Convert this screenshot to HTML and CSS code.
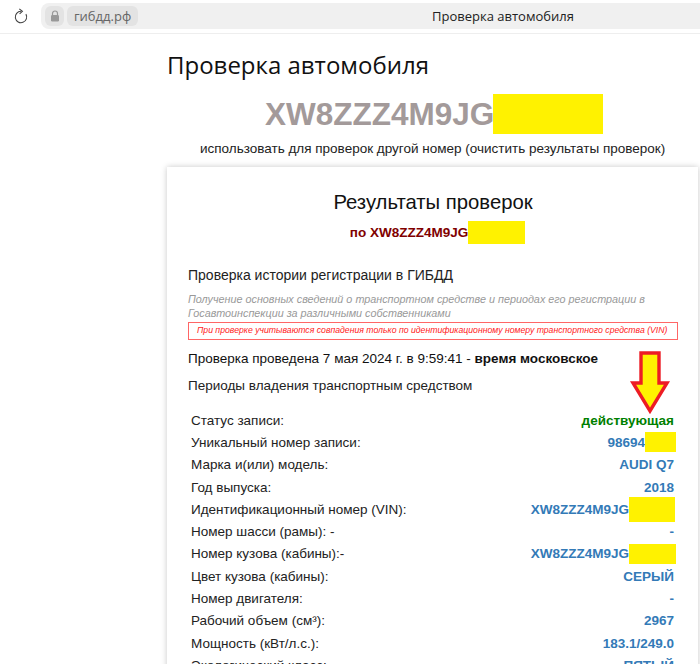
FILE: index.html
```html
<!DOCTYPE html>
<html lang="ru">
<head>
<meta charset="utf-8">
<title>Проверка автомобиля</title>
<link rel="stylesheet" href="styles.css">
</head>
<body>
<header class="browser">
  <svg class="reload" width="16" height="16" viewBox="0 0 16 16" fill="none" stroke="#444" stroke-width="1.1"><path d="M7 3.3A5.7 5.7 0 1 0 11.9 6.1"/><path d="M5.3 0.9L8.4 3.3 5.6 5.9"/></svg>
  <div class="address">
    <span class="lock-chip"><svg width="10" height="12" viewBox="0 0 10 12"><path d="M2.5 5V3.5a2.5 2.5 0 0 1 5 0V5" fill="none" stroke="#999" stroke-width="1.2"/><rect x="1" y="5" width="8" height="6.5" rx="1.2" fill="#999"/></svg></span>
    <span class="domain-chip">гибдд.рф</span>
    <span class="tab-title">Проверка автомобиля</span>
  </div>
</header>
<main class="page">
  <h1 class="page-title">Проверка автомобиля</h1>
  <div class="vin-line"><span class="vin">XW8ZZZ4M9JG</span><span class="mask mask-vin"></span></div>
  <p class="reset">использовать для проверок другой номер (очистить результаты проверок)</p>
  <section class="card">
    <h2 class="card-title">Результаты проверок</h2>
    <div class="card-sub">по XW8ZZZ4M9JG<span class="mask mask-sub"></span></div>
    <h3 class="check-title">Проверка истории регистрации в ГИБДД</h3>
    <p class="note">Получение основных сведений о транспортном средстве и периодах его регистрации в Госавтоинспекции за различными собственниками</p>
    <p class="warn">При проверке учитываются совпадения только по идентификационному номеру транспортного средства (VIN)</p>
    <p class="date">Проверка проведена 7 мая 2024 г. в 9:59:41 - <b>время московское</b></p>
    <p class="periods">Периоды владения транспортным средством</p>
    <svg class="arrow" width="42" height="64" viewBox="0 0 42 64"><polygon points="12,2 30,2 30,32 38,32 21,60 4,32 12,32" fill="#fff200" stroke="#ed1c24" stroke-width="3.4"/></svg>
    <dl class="rows">
      <div class="row"><dt>Статус записи:</dt><dd class="ok">действующая</dd></div>
      <div class="row"><dt>Уникальный номер записи:</dt><dd>98694<span class="mask mask-a"></span></dd></div>
      <div class="row"><dt>Марка и(или) модель:</dt><dd>AUDI Q7</dd></div>
      <div class="row"><dt>Год выпуска:</dt><dd>2018</dd></div>
      <div class="row"><dt>Идентификационный номер (VIN):</dt><dd>XW8ZZZ4M9JG<span class="mask mask-b"></span></dd></div>
      <div class="row"><dt>Номер шасси (рамы): -</dt><dd>-</dd></div>
      <div class="row"><dt>Номер кузова (кабины):-</dt><dd>XW8ZZZ4M9JG<span class="mask mask-c"></span></dd></div>
      <div class="row"><dt>Цвет кузова (кабины):</dt><dd>СЕРЫЙ</dd></div>
      <div class="row"><dt>Номер двигателя:</dt><dd>-</dd></div>
      <div class="row"><dt>Рабочий объем (см³):</dt><dd>2967</dd></div>
      <div class="row"><dt>Мощность (кВт/л.с.):</dt><dd>183.1/249.0</dd></div>
      <div class="row"><dt>Экологический класс:</dt><dd>ПЯТЫЙ</dd></div>
    </dl>
  </section>
</main>
</body>
</html>
```
FILE: styles.css
```css
* { box-sizing: border-box; }
html, body { margin: 0; height: 664px; overflow: hidden; background: #fff; }
body { font-family: "Liberation Sans", Arial, sans-serif; color: #111; }

.browser { height: 34px; padding: 3px 0 4px 14px; display: flex; align-items: center; border-bottom: 1px solid #eeeeee; }
.reload { flex: none; margin-right: 11px; }
.address { flex: 1; height: 26px; display: flex; align-items: center; gap: 3px; padding-left: 4px; background: #f0f0f0; border-radius: 8px 0 0 8px; position: relative; }
.lock-chip { width: 19px; height: 20px; display: flex; align-items: center; justify-content: center; background: #e3e3e3; border-radius: 6px; }
.domain-chip { width: 71px; height: 20px; padding-left: 7px; background: #e3e3e3; border-radius: 6px; font: 13px/20px "Open Sans", sans-serif; color: #666; }
.tab-title { position: absolute; left: 391px; top: 3px; font: 13px/20px "Open Sans", sans-serif; color: #222; }

.page { padding-left: 167px; padding-right: 2px; }
.page-title { margin: 13px 0 0; font: 400 24px/36px "Open Sans", sans-serif; color: #111; }
.vin-line { height: 40px; margin-top: 11px; padding-left: 98px; display: flex; }
.vin { font: 700 31.5px/40px "Liberation Sans", sans-serif; color: #a39a9a; }
.mask { display: inline-block; background: #fff200; }
.mask-vin { width: 110px; height: 40px; margin-left: -1px; }
.reset { margin: 5px 0 0; padding-left: 33px; font-size: 13.5px; line-height: 20px; color: #222; }

.card { position: relative; height: 520px; margin-top: 8px; padding: 22px 20px 0 21px; background: #fff; box-shadow: 0 0 6px rgba(0, 0, 0, .22); }
.card-title { margin: 0; text-align: center; font: 400 20.3px/26px "Liberation Sans", sans-serif; color: #111; }
.card-sub { height: 23px; margin-top: 6px; padding-left: 9px; display: flex; justify-content: center; align-items: center; font-size: 13.5px; font-weight: 700; color: #800000; }
.mask-sub { width: 57px; height: 23px; }
.check-title { margin: 22px 0 0; font-weight: 400; font-size: 14px; line-height: 18px; color: #222; }
.note { margin: 8px 0 0; font-size: 10.8px; font-style: italic; line-height: 14px; color: #999; }
.warn { height: 18px; margin: 2px 0 0; padding-left: 8px; border: 1px solid #f66; font-size: 8.7px; font-style: italic; line-height: 15px; color: #f22; white-space: nowrap; }
.date { margin: 10px 0 0; font-size: 13.5px; line-height: 18px; color: #111; }
.periods { margin: 9px 0 0; font-size: 13.5px; line-height: 18px; color: #222; }
.arrow { position: absolute; right: 27px; top: 184px; }

.rows { margin: 14px 0 0; padding-left: 3px; }
.row { height: 22.3px; display: flex; justify-content: space-between; align-items: center; padding-right: 4px; }
.row dt { font-size: 13.5px; color: #222; }
.row dd { margin: 0; display: flex; align-items: center; font-size: 13.5px; font-weight: 700; color: #337ab7; }
.row dd.ok { color: #008000; }
.mask-a { width: 31px; height: 20px; margin-right: -2px; }
.mask-b { width: 46px; height: 25px; margin-right: -1px; }
.mask-c { width: 47px; height: 20px; margin-right: -2px; }
```
